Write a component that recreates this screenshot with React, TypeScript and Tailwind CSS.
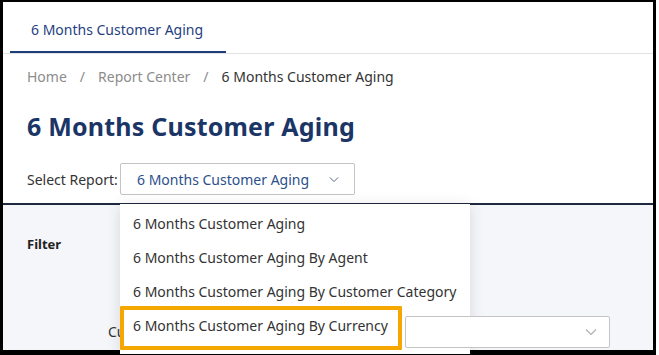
import React from 'react';

const reports = [
  '6 Months Customer Aging',
  '6 Months Customer Aging By Agent',
  '6 Months Customer Aging By Customer Category',
  '6 Months Customer Aging By Currency',
];

function Chevron({ className }: { className?: string }) {
  return (
    <svg viewBox="0 0 12 8" className={className} fill="none" stroke="currentColor" strokeWidth="1.2">
      <path d="M1 1.5l5 5 5-5" />
    </svg>
  );
}

export default function App() {
  return (
    <div className="w-[659px] h-[355px] bg-white overflow-hidden font-['Noto_Sans',sans-serif]">
      <div className="relative w-[656px] h-[355px] border-l-[3px] border-t-[2px] border-r-[3px] border-b-[5px] border-black flex flex-col">
        {/* Tabs */}
        <div className="h-[52px] border-b border-[#e2e2e2] flex items-end px-[7px] shrink-0">
          <div className="w-[216px] h-[42px] border-b-[2px] border-[#1e3d7b] flex items-center pl-[21px]">
            <span className="text-[14px] text-[#1f3f82] leading-none pb-[2px]">6 Months Customer Aging</span>
          </div>
        </div>

        {/* Header area */}
        <div className="px-[24px] shrink-0">
          <div className="h-[44px] flex items-center text-[14px] text-[#8c8c8c] gap-[13px] pt-[1px]">
            <span>Home</span>
            <span>/</span>
            <span>Report Center</span>
            <span>/</span>
            <span className="text-[#333]">6 Months Customer Aging</span>
          </div>
          <h1 className="mt-[13px] h-[30px] flex items-center text-[25px] font-bold text-[#1a3566] leading-none tracking-[0.2px]">
            6 Months Customer Aging
          </h1>
          <div className="mt-[22px] flex items-center h-[32px]">
            <span className="text-[14px] text-[#333] w-[93px]">Select Report:</span>
            <div className="w-[235px] h-[32px] border border-[#c4c4c4] rounded-[2px] flex items-center pl-[16px] pr-[16px] justify-between">
              <span className="text-[14px] text-[#2c4f8c]">6 Months Customer Aging</span>
              <Chevron className="w-[10px] h-[7px] text-[#5a6a88] mr-[-1px]" />
            </div>
          </div>
        </div>

        {/* Filter area */}
        <div className="mt-[8px] flex-1 bg-[#f5f6f9] border-t-[2px] border-[#1e2940] px-[24px] pt-[30px]">
          <div className="text-[13px] font-bold text-[#222]">Filter</div>
          <div className="mt-[61px] flex items-center h-[32px]">
            <span className="ml-[81px] text-[14px] text-[#333] w-[297px]">Currency</span>
            <div className="relative z-20 w-[205px] h-[32px] bg-white border border-[#c4c4c4] rounded-[2px] flex items-center justify-end pr-[12px]">
              <Chevron className="w-[12px] h-[8px] text-[#b0b0b0]" />
            </div>
          </div>
        </div>

        {/* Open dropdown menu */}
        <div className="absolute z-10 left-[117px] top-[202px] w-[350px] h-[150px] bg-white shadow-[0_2px_14px_rgba(0,0,0,0.12)] flex flex-col pt-[2px]">
          {reports.map((r) => (
            <div key={r} className="h-[34px] flex items-center pl-[13px] text-[14px] text-[#333]">
              {r}
            </div>
          ))}
        </div>

        {/* Highlight annotation */}
        <div className="absolute z-30 left-[117px] top-[304px] w-[282px] h-[44px] border-[4px] border-[#f5a700] rounded-[1px]" />
      </div>
    </div>
  );
}
